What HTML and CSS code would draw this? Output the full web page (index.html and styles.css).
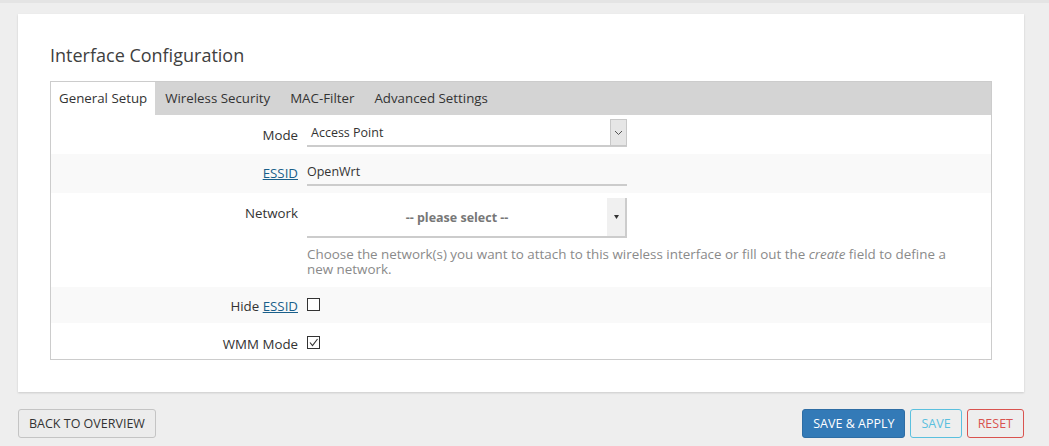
FILE: index.html
```html
<!DOCTYPE html>
<html>
<head>
<meta charset="utf-8">
<link rel="stylesheet" href="styles.css">
</head>
<body>
<div class="topbar"></div>
<div class="card">
  <h2 class="title">Interface Configuration</h2>
  <div class="tabbox">
    <ul class="tabs">
      <li class="tab active">General Setup</li>
      <li class="tab">Wireless Security</li>
      <li class="tab">MAC-Filter</li>
      <li class="tab">Advanced Settings</li>
    </ul>
    <div class="row r-mode">
      <div class="label">Mode</div>
      <div class="field">
        <div class="select1">
          <span class="sel-text">Access Point</span>
          <span class="sel-btn"><svg width="9" height="6" viewBox="0 0 9 6"><path d="M1 1 L4.5 4.5 L8 1" fill="none" stroke="#555" stroke-width="1"/></svg></span>
        </div>
      </div>
    </div>
    <div class="row alt r-essid">
      <div class="label"><a class="lnk">ESSID</a></div>
      <div class="field">
        <div class="input1">OpenWrt</div>
      </div>
    </div>
    <div class="row r-net">
      <div class="label">Network</div>
      <div class="field">
        <div class="select2">
          <span class="sel2-text">-- please select --</span>
          <span class="sel2-btn"><svg width="5" height="4" viewBox="0 0 5 4"><path d="M0 0 L5 0 L2.5 4 Z" fill="#333"/></svg></span>
        </div>
        <div class="desc">Choose the network(s) you want to attach to this wireless interface or fill out the <em>create</em> field to define a new network.</div>
      </div>
    </div>
    <div class="row alt r-hide">
      <div class="label">Hide <a class="lnk">ESSID</a></div>
      <div class="field"><span class="cb"></span></div>
    </div>
    <div class="row r-wmm">
      <div class="label">WMM Mode</div>
      <div class="field"><span class="cb"><svg width="11" height="11" viewBox="0 0 11 11"><path d="M2 5.5 L4.5 8.5 L9.5 2" fill="none" stroke="#333" stroke-width="1.1"/></svg></span></div>
    </div>
  </div>
</div>
<div class="actions">
  <button class="btn">BACK TO OVERVIEW</button>
  <div class="right">
    <button class="btn primary">SAVE &amp; APPLY</button>
    <button class="btn info">SAVE</button>
    <button class="btn danger">RESET</button>
  </div>
</div>
</body>
</html>
```
FILE: styles.css
```css
* { box-sizing: border-box; }
html, body { margin: 0; padding: 0; }
body {
  background: #eeeeee;
  font-family: "Open Sans", "Noto Sans", sans-serif;
  font-size: 13px;
  color: #333;
  width: 1049px;
  height: 446px;
  overflow: hidden;
}
.topbar {
  height: 3px;
  background: #e4e4e4;
}
.card {
  margin: 11px 25px 0 18px;
  background: #fff;
  box-shadow: 0 1px 2px rgba(0,0,0,0.15);
  padding: 25px 32px 33px 32px;
  height: 378px;
}
.title {
  margin: 0;
  font-weight: normal;
  font-size: 18px;
  line-height: 32px;
  color: #404040;
}
.tabbox {
  margin-top: 10px;
  border: 1px solid #ccc;
}
.tabs {
  list-style: none;
  margin: 0;
  padding: 0;
  display: flex;
  background: #d4d4d4;
  height: 33px;
}
.tab {
  padding: 0 10px;
  line-height: 33px;
  color: #333;
  font-size: 13.3px;
}
.tab.active {
  background: #fff;
  padding: 0 8px;
}
.row {
  display: flex;
  align-items: flex-start;
}
.row.alt { background: #f9f9f9; }
.label {
  width: 256px;
  text-align: right;
  padding-right: 9px;
  flex: none;
  font-size: 13.3px;
}
.field { flex: none; width: 670px; }
.lnk { color: #1a5f8a; text-decoration: underline; }
.r-mode { height: 39px; }
.r-mode .label { padding-top: 11px; }
.r-mode .field { padding-top: 5px; }
.select1 {
  width: 320px;
  height: 27px;
  border-bottom: 2px solid #ccc;
  display: flex;
  justify-content: space-between;
  align-items: center;
}
.sel-text { padding-left: 4px; font-size: 12.5px; }
.sel-btn {
  width: 17px;
  height: 27px;
  background: #e6e6e6;
  border: 1px solid #c8c8c8;
  display: flex;
  align-items: center;
  justify-content: center;
}
.r-essid { height: 39px; }
.r-essid .label { padding-top: 10px; }
.r-essid .field { padding-top: 7px; }
.input1 {
  width: 320px;
  height: 25px;
  border-bottom: 2px solid #ccc;
  line-height: 22px;
  font-size: 12.5px;
}
.r-net { height: 94px; }
.r-net .label { padding-top: 11px; }
.r-net .field { padding-top: 5px; }
.select2 {
  width: 320px;
  height: 40px;
  display: flex;
  border-bottom: 2px solid #ccc;
}
.sel2-text {
  flex: 1;
  text-align: center;
  line-height: 40px;
  color: #777;
  font-weight: bold;
  font-size: 12.5px;
}
.sel2-btn {
  width: 20px;
  background: #f0f0f0;
  border-right: 2px solid #ccc;
  display: flex;
  align-items: center;
  justify-content: center;
}
.desc {
  margin-top: 9px;
  color: #8a8a8a;
  line-height: 15px;
  font-size: 13.4px;
  width: 660px;
}
.r-hide { height: 36px; }
.r-hide .label { padding-top: 10px; }
.r-hide .field { padding-top: 11px; }
.r-wmm { height: 36px; }
.r-wmm .label { padding-top: 12px; }
.r-wmm .field { padding-top: 13px; }
.cb {
  display: flex;
  width: 13px;
  height: 13px;
  border: 1px solid #333;
  align-items: center;
  justify-content: center;
  background: #fff;
}
.actions {
  display: flex;
  justify-content: space-between;
  margin: 17px 25px 0 18px;
}
.right { display: flex; gap: 5px; }
.btn {
  font-family: "Open Sans", "Noto Sans", sans-serif;
  font-size: 12.5px;
  height: 29px;
  padding: 0 10px;
  border-radius: 3px;
  border: 1px solid #c4c4c4;
  background: #ececec;
  color: #333;
}
.btn.primary {
  background: #337ab7;
  border-color: #2e6da4;
  color: #fff;
}
.btn.info {
  background: transparent;
  border-color: #5bc0de;
  color: #5bc0de;
}
.btn.danger {
  background: transparent;
  border-color: #d9534f;
  color: #d9534f;
}
```
